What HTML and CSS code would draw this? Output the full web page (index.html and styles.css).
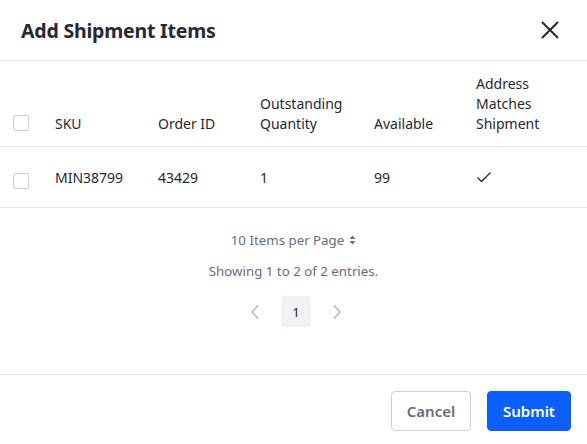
FILE: index.html
```html
<!DOCTYPE html>
<html>
<head>
<meta charset="utf-8">
<link rel="stylesheet" href="styles.css">
</head>
<body>
<div class="modal">
  <div class="modal-header">
    <h1 class="modal-title">Add Shipment Items</h1>
    <button class="close" aria-label="Close">
      <svg width="18" height="18" viewBox="0 0 18 18"><path d="M1.5 1.5 L16.5 16.5 M16.5 1.5 L1.5 16.5" stroke="#272833" stroke-width="2" stroke-linecap="round"/></svg>
    </button>
  </div>
  <div class="table">
    <div class="row head">
      <div class="cell"><span class="checkbox"></span></div>
      <div class="cell">SKU</div>
      <div class="cell">Order ID</div>
      <div class="cell">Outstanding Quantity</div>
      <div class="cell">Available</div>
      <div class="cell">Address Matches Shipment</div>
    </div>
    <div class="row body-row">
      <div class="cell"><span class="checkbox"></span></div>
      <div class="cell">MIN38799</div>
      <div class="cell">43429</div>
      <div class="cell">1</div>
      <div class="cell">99</div>
      <div class="cell">
        <svg width="16" height="12" viewBox="0 0 16 12"><path d="M1.5 6.5 L5.5 10.5 L14.5 1.5" fill="none" stroke="#272833" stroke-width="1.3"/></svg>
      </div>
    </div>
  </div>
  <div class="pager">
    <div class="per-page">10 Items per Page
      <svg width="7" height="10" viewBox="0 0 7 10"><path d="M3.5 0.5 L6.5 4 L0.5 4 Z M3.5 9.5 L6.5 6 L0.5 6 Z" fill="#6b6c7e"/></svg>
    </div>
    <div class="showing">Showing 1 to 2 of 2 entries.</div>
    <div class="pages">
      <span class="page-arrow"><svg width="10" height="16" viewBox="0 0 10 16"><path d="M8 1.5 L2 8 L8 14.5" fill="none" stroke="#b0b1bb" stroke-width="1.4"/></svg></span>
      <span class="page active">1</span>
      <span class="page-arrow"><svg width="10" height="16" viewBox="0 0 10 16"><path d="M2 1.5 L8 8 L2 14.5" fill="none" stroke="#b0b1bb" stroke-width="1.4"/></svg></span>
    </div>
  </div>
  <div class="modal-footer">
    <button class="btn btn-secondary">Cancel</button>
    <button class="btn btn-primary">Submit</button>
  </div>
</div>
</body>
</html>
```

FILE: styles.css
```css
* { box-sizing: border-box; }
html, body { margin: 0; padding: 0; background: #fff; }
body {
  font-family: "Noto Sans", "Open Sans", sans-serif;
  font-size: 14px;
  color: #272833;
  width: 587px;
  height: 444px;
  overflow: hidden;
}
.modal { display: flex; flex-direction: column; height: 444px; }
.modal-header {
  height: 61px;
  border-bottom: 1px solid #e7e7ed;
  display: flex;
  align-items: center;
  justify-content: space-between;
  padding: 0 28px 0 21px;
}
.modal-title { margin: 0; font-size: 19.5px; font-weight: 700; letter-spacing: -0.2px; }
.close { border: 0; background: none; padding: 0; display: flex; margin-top: -1px; }
.row {
  display: grid;
  grid-template-columns: 42px 103px 102px 114px 102px 1fr;
  border-bottom: 1px solid #e7e7ed;
}
.cell { padding-left: 13px; line-height: 20px; }
.head { padding: 13px 0 12px; align-items: end; }
.head .cell { padding-right: 30px; }
.head .cell:nth-child(4) { padding-right: 10px; }
.body-row { height: 61px; align-items: center; padding-top: 2px; }
.checkbox {
  display: block;
  width: 16px;
  height: 16px;
  border: 1px solid #cdced9;
  border-radius: 2px;
  background: #fff;
}
.head .checkbox { margin-bottom: 3px; }
.body-row .checkbox { margin-top: 5px; }
.pager {
  display: flex;
  flex-direction: column;
  align-items: center;
  color: #6b6c7e;
  font-size: 13.3px;
  padding-top: 22px;
}
.per-page { display: flex; align-items: center; gap: 5px; line-height: 20px; }
.showing { margin-top: 11px; line-height: 20px; }
.pages { margin-top: 15px; margin-left: 5px; display: flex; align-items: center; gap: 19px; }
.page-arrow { display: flex; width: 14px; justify-content: center; }
.page {
  width: 30px; height: 31px;
  display: flex; align-items: center; justify-content: center;
  border-radius: 4px;
  color: #272833;
}
.page.active { background: #f1f2f5; }
.modal-footer {
  margin-top: auto;
  border-top: 1px solid #e7e7ed;
  height: 70px;
  display: flex;
  justify-content: flex-end;
  align-items: flex-start;
  padding: 16px 16px 0 0;
  gap: 16px;
}
.btn {
  height: 40px;
  border-radius: 4px;
  font-family: inherit;
  font-size: 15px;
  font-weight: 600;
  padding: 0 14px;
  cursor: pointer;
}
.btn-secondary { width: 80px; background: #fff; border: 1px solid #cdced9; color: #6b6c7e; }
.btn-primary { width: 84px; background: #0b5fff; border: 1px solid #0b5fff; color: #fff; }
```
